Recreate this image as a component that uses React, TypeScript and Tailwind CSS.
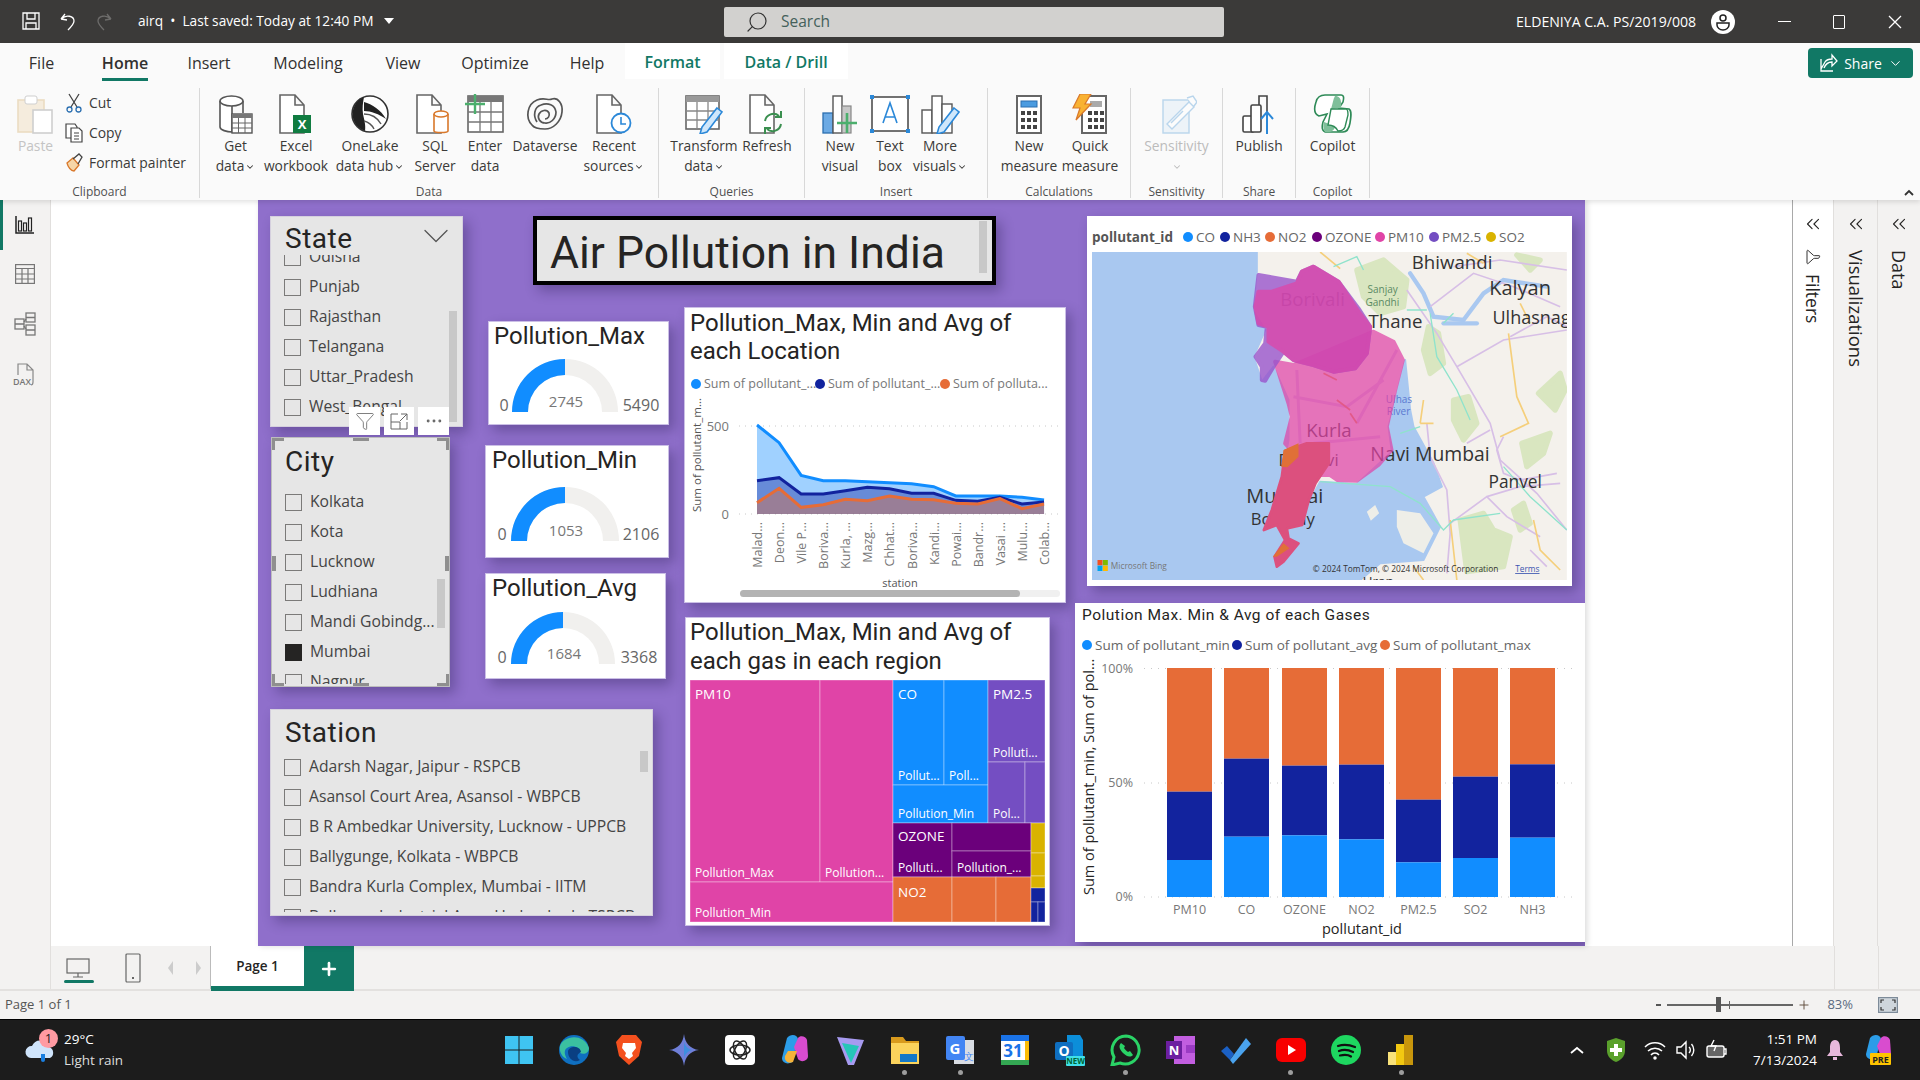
import { ReactNode } from 'react'
import { ChevronDown, ChevronsLeft, Filter, MoreHorizontal, Plus, Search } from 'lucide-react'

const DIN = "font-['Roboto',sans-serif]"

const TABS = [
  { label: 'File', w: 'w-[83px]' },
  { label: 'Home', w: 'w-[84px]', active: true },
  { label: 'Insert', w: 'w-[84px]' },
  { label: 'Modeling', w: 'w-[114px]' },
  { label: 'View', w: 'w-[76px]' },
  { label: 'Optimize', w: 'w-[108px]' },
  { label: 'Help', w: 'w-[76px]' },
]

const COLORS = {
  CO: '#118dff',
  NH3: '#12239e',
  NO2: '#e66c37',
  OZONE: '#6b007b',
  PM10: '#e044a7',
  'PM2.5': '#744ec2',
  SO2: '#d9b300',
}

/* ribbon icons, all on a 40 box */
function Ico({ children, dim }: { children: ReactNode; dim?: boolean }) {
  return (
    <svg viewBox="0 0 40 40" className={dim ? 'h-[40px] w-[40px] opacity-40' : 'h-[40px] w-[40px]'} fill="none">
      {children}
    </svg>
  )
}

const Doc = ({ x = 6 }: { x?: number }) => (
  <path
    d={`M${x} 1h15l9 10v28h-24z M${x + 15} 1v10h9`}
    fill="#fff"
    stroke="#666"
    strokeWidth="1.6"
  />
)

const RIBBON_ICONS: Record<string, ReactNode> = {
  getdata: (
    <Ico>
      <path d="M4 7v26c0 3 7 5 12 5V7" fill="#fff" stroke="#555" strokeWidth="1.6" />
      <path d="M27 7v12" stroke="#555" strokeWidth="1.6" />
      <ellipse cx="15.5" cy="7" rx="11.5" ry="5" fill="#fff" stroke="#555" strokeWidth="1.6" />
      <rect x="16" y="20" width="20" height="19" fill="#fff" stroke="#555" strokeWidth="1.4" />
      <path d="M16 20h20v4H16z" fill="#777" />
      <path d="M22.5 24v15M29 24v15M16 29h20M16 34h20" stroke="#666" />
    </Ico>
  ),
  excel: (
    <Ico>
      <Doc x={4} />
      <rect x="17" y="21" width="18" height="18" fill="#107c41" />
      <text x="26" y="35" fill="#fff" fontSize="13" textAnchor="middle" fontWeight="700">
        X
      </text>
    </Ico>
  ),
  onelake: (
    <Ico>
      <circle cx="20" cy="20" r="18" fill="#fff" stroke="#333" strokeWidth="1.6" />
      <path d="M14 3C6 6 1 15 3 24c1 6 6 11 12 13 1-6-1-12-2-17-1-6 0-12 1-17z" fill="#222" />
      <path d="M14 8c8 2 17 8 22 17-7-5-15-8-22-8z" fill="#222" />
      <path d="M14 20c6 0 13 3 17 10M14 27c4 1 8 4 10 8" stroke="#555" strokeWidth="1.4" />
    </Ico>
  ),
  sql: (
    <Ico>
      <Doc x={2} />
      <path d="M19 20v17c0 2 14 2 14 0V20" fill="#fff" stroke="#d9782b" strokeWidth="1.6" />
      <ellipse cx="26" cy="20" rx="7" ry="3" fill="#fff" stroke="#d9782b" strokeWidth="1.6" />
    </Ico>
  ),
  enter: (
    <Ico>
      <rect x="3" y="2" width="35" height="36" fill="#fff" stroke="#666" strokeWidth="1.6" />
      <path d="M3 2h35v6H3z" fill="#777" />
      <path d="M15 8v30M26 8v30M3 18h35M3 28h35" stroke="#777" strokeWidth="1.3" />
      <path d="M10 0v20M0 10h20" stroke="#4caf6d" strokeWidth="2.4" />
    </Ico>
  ),
  dataverse: (
    <Ico>
      <path
        d="M7 31C0 24 2 10 12 6c8-3 11 1 15-1 6-2 11 5 10 13-1 10-9 17-17 17-6 0-11-1-13-4z"
        stroke="#555"
        strokeWidth="1.7"
      />
      <path
        d="M12 28c-4-6-3-15 4-17 7-3 14 0 15 7 0 7-6 12-11 11-5 0-8-5-6-9 2-4 8-5 10-1 1 3-1 6-4 6"
        stroke="#555"
        strokeWidth="1.7"
      />
    </Ico>
  ),
  recent: (
    <Ico>
      <Doc x={3} />
      <circle cx="27" cy="29" r="9.5" fill="#fff" stroke="#2b88d8" strokeWidth="1.8" />
      <path d="M27 23v7h5" stroke="#2b88d8" strokeWidth="1.6" />
    </Ico>
  ),
  transform: (
    <Ico>
      <rect x="2" y="2" width="33" height="33" fill="#fff" stroke="#666" strokeWidth="1.6" />
      <path d="M2 2h33v6H2z" fill="#999" />
      <path d="M13 8v27M24 8v27M2 17h33M2 26h33" stroke="#888" strokeWidth="1.3" />
      <path d="M33 14l5 4-15 20-7 2 2-7z" fill="#cfe7fb" stroke="#2b88d8" strokeWidth="1.6" />
    </Ico>
  ),
  refresh: (
    <Ico>
      <Doc x={3} />
      <path d="M18 27a8.5 8.5 0 0 1 14-5M34 30a8.5 8.5 0 0 1-14 5" stroke="#3a8f4f" strokeWidth="2" />
      <path d="M34 17v6h-6M18 40v-6h6" stroke="#3a8f4f" strokeWidth="2" />
    </Ico>
  ),
  newvisual: (
    <Ico>
      <rect x="3" y="19" width="10" height="20" fill="#6caae4" stroke="#2b6fb0" strokeWidth="1.3" />
      <rect x="13" y="2" width="9" height="37" fill="#fff" stroke="#555" strokeWidth="1.4" />
      <rect x="22" y="12" width="9" height="27" fill="#c8c8c8" stroke="#888" strokeWidth="1.2" />
      <path d="M27 19v20M17 29h20" stroke="#4caf6d" strokeWidth="2.6" />
    </Ico>
  ),
  textbox: (
    <Ico>
      <rect x="2" y="3" width="36" height="34" fill="#fff" stroke="#444" strokeWidth="1.5" />
      <path d="M13 29l7-20 7 20M15.5 23h9" stroke="#2b88d8" strokeWidth="1.6" />
      <path
        d="M0 1h4v4H0zM36 1h4v4h-4zM0 35h4v4H0zM36 35h4v4h-4z"
        fill="#2b88d8"
      />
    </Ico>
  ),
  morevisuals: (
    <Ico>
      <rect x="2" y="16" width="10" height="23" fill="#fff" stroke="#555" strokeWidth="1.4" />
      <rect x="12" y="2" width="10" height="37" fill="#fff" stroke="#555" strokeWidth="1.4" />
      <rect x="22" y="10" width="10" height="29" fill="#fff" stroke="#555" strokeWidth="1.4" />
      <path d="M34 14l5 4-15 20-7 2 2-7z" fill="#cfe7fb" stroke="#2b88d8" strokeWidth="1.6" />
    </Ico>
  ),
  measure: (
    <Ico>
      <rect x="8" y="2" width="24" height="37" fill="#fff" stroke="#666" strokeWidth="2" />
      <rect x="12" y="7" width="16" height="6" fill="#4a9be0" stroke="#2b6fb0" />
      <path
        d="M12 17h4v4h-4zM18 17h4v4h-4zM24 17h4v4h-4zM12 24h4v4h-4zM18 24h4v4h-4zM24 24h4v4h-4zM12 31h4v4h-4zM18 31h4v4h-4zM24 31h4v4h-4z"
        fill="#444"
      />
    </Ico>
  ),
  quick: (
    <Ico>
      <rect x="12" y="2" width="24" height="37" fill="#fff" stroke="#666" strokeWidth="2" />
      <path d="M20 7h12v6H20z" fill="#aaa" />
      <path
        d="M18 17h4v4h-4zM24 17h4v4h-4zM30 17h4v4h-4zM18 24h4v4h-4zM24 24h4v4h-4zM30 24h4v4h-4zM18 31h4v4h-4zM24 31h4v4h-4zM30 31h4v4h-4z"
        fill="#444"
      />
      <path d="M10 0h11l-6 10h6L6 26l4-12H3z" fill="#f9b233" stroke="#d9782b" strokeWidth="1.2" />
    </Ico>
  ),
  sensitivity: (
    <Ico dim>
      <rect x="6" y="6" width="26" height="33" fill="#dbeaf7" stroke="#5aa0d8" strokeWidth="1.4" />
      <path d="M10 30l22-22 5 5-22 22zM30 4l6-2 4 6-3 4" fill="#fff" stroke="#5aa0d8" strokeWidth="1.4" />
      <path d="M14 29l12-12" stroke="#5aa0d8" strokeWidth="1.4" />
    </Ico>
  ),
  publish: (
    <Ico>
      <rect x="4" y="22" width="11" height="16" rx="1.5" fill="#fff" stroke="#444" strokeWidth="1.6" />
      <rect x="12" y="11" width="10" height="27" rx="1.5" fill="#fff" stroke="#444" strokeWidth="1.6" />
      <path d="M20 11V2h8v16" stroke="#444" strokeWidth="1.6" />
      <path d="M28 40V18M22 25l6-7 6 7" stroke="#2b88d8" strokeWidth="2" />
    </Ico>
  ),
  copilot: (
    <Ico>
      <path
        d="M12 1h16c3 0 3 3 2 7L26 14l10 1c3 2 2 8 1 14-1 6-3 9-7 9H14c-6 0-5-6-4-10L14 20 6 22C1 20 1 14 3 8c1-4 4-7 9-7z"
        fill="#fff"
        stroke="#2e8a57"
        strokeWidth="1.6"
      />
      <path d="M22 2c4 0 7 2 6 12l-10 1C20 9 20 5 22 2zM12 38c-2-3-2-7-1-10l11 4c0 3-2 5-5 6z" fill="#7fbf9a" />
      <path d="M18 15h15c2 0 2 3 2 6l-3 12c-1 3-3 4-7 4-3-6-9-6-10-6z" fill="#fff" stroke="#2e8a57" strokeWidth="1.4" />
    </Ico>
  ),
}

function RibbonButton({
  w,
  icon,
  line1,
  line2,
  caret,
  dim,
}: {
  w: string
  icon: string
  line1: string
  line2?: string
  caret?: boolean
  dim?: boolean
}) {
  return (
    <div className={`${w} flex h-full flex-col items-center pt-[6px]`}>
      {RIBBON_ICONS[icon]}
      <div
        className={
          dim
            ? 'mt-[2px] whitespace-nowrap text-center text-[13.8px] leading-[20px] text-[#bcbcbc]'
            : 'mt-[2px] whitespace-nowrap text-center text-[13.8px] leading-[20px] text-[#3b3a39]'
        }
      >
        {line1}
        <br />
        {line2}
        {caret && <ChevronDown className="ml-[1px] inline h-[10px] w-[10px]" strokeWidth={2.5} />}
      </div>
    </div>
  )
}

function RibbonGroup({
  w,
  pl,
  label,
  children,
}: {
  w: string
  pl: string
  label: string
  children: ReactNode
}) {
  return (
    <div className={`${w} flex h-[110px] shrink-0 flex-col border-r border-[#d8d8d8]`}>
      <div className={`${pl} flex h-[94px]`}>{children}</div>
      <div className="h-[16px] text-center text-[12px] leading-[20px] text-[#505050]">{label}</div>
    </div>
  )
}

function TitleBar() {
  return (
    <div className="flex h-[43px] items-center bg-[#3b3a39] text-[13.7px] text-white">
      <div className="flex w-[724px] items-center">
        <svg viewBox="0 0 20 20" className="ml-[21px] h-[20px] w-[20px]" fill="none" stroke="#fff" strokeWidth="1.3">
          <path d="M2 2h16v16H2zM6 2v6h8V2M5 18v-6h10v6" />
        </svg>
        <svg viewBox="0 0 20 20" className="ml-[17px] h-[20px] w-[20px]" fill="none" stroke="#fff" strokeWidth="1.3">
          <path d="M3 8l4-5M3 8l6 1M3.5 8C8 3 16 5 16 10c0 3-3 6-6 9" />
        </svg>
        <svg viewBox="0 0 20 20" className="ml-[16px] h-[20px] w-[20px]" fill="none" stroke="#6d6c6b" strokeWidth="1.3">
          <path d="M17 8l-4-5M17 8l-6 1M16.5 8C12 3 4 5 4 10c0 3 3 6 6 9" />
        </svg>
        <span className="ml-[24px] whitespace-nowrap">airq &nbsp;•&nbsp; Last saved: Today at 12:40 PM</span>
        <span className="ml-[10px] h-0 w-0 border-x-[5px] border-t-[6px] border-x-transparent border-t-white" />
      </div>
      <div className="flex h-[30px] w-[500px] items-center rounded-[2px] bg-[#d2d1cf] pl-[21px] text-[#44605a]">
        <Search className="h-[24px] w-[24px] -scale-x-100 text-[#333]" strokeWidth={1.2} />
        <span className="ml-[12px] text-[15.5px]">Search</span>
      </div>
      <div className="flex flex-1 items-center">
        <span className="ml-[292px] whitespace-nowrap text-[14.1px]">ELDENIYA C.A. PS/2019/008</span>
        <svg viewBox="0 0 24 24" className="ml-[15px] h-[24px] w-[24px]">
          <circle cx="12" cy="12" r="12" fill="#fff" />
          <circle cx="12" cy="8" r="3" fill="#fff" stroke="#222" strokeWidth="1.5" />
          <path d="M6 13h12v2a6 5 0 0 1-12 0z" fill="#fff" stroke="#222" strokeWidth="1.5" />
        </svg>
        <span className="ml-[43px] h-[1.5px] w-[13px] bg-white" />
        <span className="ml-[42px] h-[14px] w-[12px] rounded-[1px] border-[1.5px] border-white" />
        <svg viewBox="0 0 14 14" className="ml-[43px] h-[14px] w-[14px]" stroke="#fff" strokeWidth="1.3">
          <path d="M1 1l12 12M13 1L1 13" />
        </svg>
      </div>
    </div>
  )
}

function Ribbon() {
  return (
    <div className="relative z-10 h-[157px] bg-[#fafafa] shadow-[0_2px_5px_rgba(0,0,0,0.12)]">
      <div className="flex h-[40px] items-start">
        {TABS.map((t) => (
          <div key={t.label} className={`${t.w} flex justify-center text-[16px] text-[#323130]`}>
            <span
              className={
                t.active
                  ? 'flex h-[38px] items-center border-b-[3px] border-[#117865] pt-[4px] font-semibold'
                  : 'flex h-[40px] items-center'
              }
            >
              {t.label}
            </span>
          </div>
        ))}
        <div className="flex h-[36px] w-[95px] items-center justify-center bg-white pt-[1px] text-[16px] font-semibold text-[#117865]">
          Format
        </div>
        <div className="ml-[4px] flex h-[36px] w-[124px] items-center justify-center bg-white pt-[1px] text-[16px] font-semibold text-[#117865]">
          Data / Drill
        </div>
        <div className="ml-auto mr-[7px] mt-[5px] flex h-[30px] w-[105px] items-center justify-center gap-[6px] rounded-[4px] bg-[#117865] text-[14px] text-white">
          <svg viewBox="0 0 20 20" className="h-[20px] w-[20px]" fill="none" stroke="#fff" strokeWidth="1.3">
            <path d="M3 6v12h12M3 16L7 9c2-3 5-3 7-3V2l5 6-5 5V9c-3 0-6 1-8 6" />
          </svg>
          Share
          <ChevronDown className="h-[15px] w-[15px]" strokeWidth={1.6} />
        </div>
      </div>
      <div className="mt-[5px] flex">
        <RibbonGroup w="w-[200px]" pl="pl-0" label="Clipboard">
          <div className="flex h-full w-[65px] flex-col items-center pl-[6px] pt-[6px]">
            <svg viewBox="0 0 40 40" className="h-[40px] w-[40px]" fill="none">
              <rect x="2" y="6" width="26" height="32" fill="#f5ecdd" stroke="#ebdcc2" strokeWidth="1.6" />
              <rect x="9" y="2" width="12" height="8" rx="2" fill="#fff" stroke="#cfcfcf" />
              <rect x="17" y="16" width="19" height="23" fill="#fff" stroke="#cfcfcf" strokeWidth="1.6" />
            </svg>
            <div className="mt-[2px] text-[13.8px] leading-[20px] text-[#c4c4c4]">Paste</div>
          </div>
          <div className="text-[13.9px] text-[#3b3a39]">
            <div className="flex h-[30px] items-center gap-[6px]">
              <svg viewBox="0 0 18 20" className="h-[20px] w-[18px]" fill="none" strokeWidth="1.3">
                <path d="M4 1l8 13M14 1L6 14" stroke="#444" />
                <circle cx="4.5" cy="16.5" r="2.5" stroke="#2b6fb0" />
                <circle cx="13.5" cy="16.5" r="2.5" stroke="#2b6fb0" />
              </svg>
              Cut
            </div>
            <div className="flex h-[30px] items-center gap-[6px]">
              <svg viewBox="0 0 18 20" className="h-[20px] w-[18px]" fill="#fff" stroke="#444" strokeWidth="1.2">
                <path d="M1 1h9l2 3v11H1z" />
                <path d="M6 5h8l3 3v11H6z" />
                <path d="M9 10h5M9 13h5M9 16h5" />
              </svg>
              Copy
            </div>
            <div className="flex h-[30px] items-center gap-[6px]">
              <svg viewBox="0 0 18 20" className="h-[20px] w-[18px]" fill="none" strokeWidth="1.3">
                <path d="M2 10l6-5 6 7-5 6c-3 0-6-4-7-8z" fill="#f6d6a8" stroke="#d9782b" />
                <path d="M8 6l6-5 3 3-4 7" stroke="#444" />
              </svg>
              Format painter
            </div>
          </div>
        </RibbonGroup>
        <RibbonGroup w="w-[459px]" pl="pl-[5px]" label="Data">
          <RibbonButton w="w-[61px]" icon="getdata" line1="Get" line2="data" caret />
          <RibbonButton w="w-[60px]" icon="excel" line1="Excel" line2="workbook" />
          <RibbonButton w="w-[88px]" icon="onelake" line1="OneLake" line2="data hub" caret />
          <RibbonButton w="w-[42px]" icon="sql" line1="SQL" line2="Server" />
          <RibbonButton w="w-[58px]" icon="enter" line1="Enter" line2="data" />
          <RibbonButton w="w-[62px]" icon="dataverse" line1="Dataverse" />
          <RibbonButton w="w-[76px]" icon="recent" line1="Recent" line2="sources" caret />
        </RibbonGroup>
        <RibbonGroup w="w-[146px]" pl="pl-[8px]" label="Queries">
          <RibbonButton w="w-[74px]" icon="transform" line1="Transform" line2="data" caret />
          <RibbonButton w="w-[52px]" icon="refresh" line1="Refresh" />
        </RibbonGroup>
        <RibbonGroup w="w-[183px]" pl="pl-[10px]" label="Insert">
          <RibbonButton w="w-[50px]" icon="newvisual" line1="New" line2="visual" />
          <RibbonButton w="w-[50px]" icon="textbox" line1="Text" line2="box" />
          <RibbonButton w="w-[50px]" icon="morevisuals" line1="More" line2="visuals" caret />
        </RibbonGroup>
        <RibbonGroup w="w-[143px]" pl="pl-[11px]" label="Calculations">
          <RibbonButton w="w-[60px]" icon="measure" line1="New" line2="measure" />
          <RibbonButton w="w-[62px]" icon="quick" line1="Quick" line2="measure" />
        </RibbonGroup>
        <RibbonGroup w="w-[92px]" pl="pl-0" label="Sensitivity">
          <RibbonButton w="w-[92px]" icon="sensitivity" line1="Sensitivity" line2="" caret dim />
        </RibbonGroup>
        <RibbonGroup w="w-[73px]" pl="pl-0" label="Share">
          <RibbonButton w="w-[73px]" icon="publish" line1="Publish" />
        </RibbonGroup>
        <RibbonGroup w="w-[74px]" pl="pl-0" label="Copilot">
          <RibbonButton w="w-[74px]" icon="copilot" line1="Copilot" />
        </RibbonGroup>
        <div className="ml-auto mr-[6px] flex h-[110px] items-end pb-[2px] text-[#333]">
          <svg viewBox="0 0 10 7" className="h-[7px] w-[10px]" fill="none" stroke="#333" strokeWidth="1.8">
            <path d="M1 6l4-4 4 4" />
          </svg>
        </div>
      </div>
    </div>
  )
}

function LeftRail() {
  return (
    <div className="relative flex w-[51px] shrink-0 flex-col items-center border-r border-[#e1dfdd] bg-[#f3f2f1] pt-[15px]">
      <span className="absolute left-0 top-0 h-[50px] w-[3px] bg-[#117865]" />
      <svg viewBox="0 0 20 20" className="h-[20px] w-[20px]" fill="none" stroke="#222" strokeWidth="1.2">
        <path d="M1 1v17h18" strokeWidth="1.5" />
        <rect x="3.5" y="6" width="3" height="10" />
        <rect x="8.5" y="8" width="3" height="8" />
        <rect x="13.5" y="3" width="3" height="13" />
      </svg>
      <svg viewBox="0 0 20 20" className="mt-[29px] h-[20px] w-[20px]" fill="none" stroke="#777" strokeWidth="1.2">
        <rect x="0.6" y="0.6" width="18.8" height="18.8" />
        <path d="M0.6 4.5h18.8M0.6 10h18.8M0.6 15h18.8M7 4.5v15M13 4.5v15" />
      </svg>
      <svg viewBox="0 0 24 24" className="mt-[28px] h-[24px] w-[24px]" fill="none" stroke="#777" strokeWidth="1.3">
        <rect x="13" y="1" width="9" height="9" />
        <rect x="13" y="13" width="9" height="10" />
        <rect x="2" y="7" width="9" height="10" />
        <path d="M13 5.5h9M13 18h9M2 12h9M11 10l2-3M11 14l2 3" />
      </svg>
      <div className="relative mt-[27px] h-[24px] w-[24px]">
        <svg viewBox="0 0 24 24" className="h-[24px] w-[24px]" fill="none" stroke="#888" strokeWidth="1.2">
          <path d="M5 12V1h9l6 6v12c0 2-1 3-2 3M14 1v6h6" />
        </svg>
        <span className="absolute bottom-0 left-0 text-[9px] font-semibold leading-[10px] text-[#777]">DAX</span>
      </div>
    </div>
  )
}

function Card({ className, children }: { className: string; children: ReactNode }) {
  return (
    <div className={`${className} absolute overflow-hidden shadow-[5px_6px_12px_rgba(30,20,70,0.33)]`}>{children}</div>
  )
}

function Check({ label, on }: { label: string; on?: boolean }) {
  return (
    <div className="flex h-[30px] items-center whitespace-nowrap pl-[13px] text-[15.7px] text-[#444]">
      <span
        className={
          on
            ? 'mr-[8px] h-[17px] w-[17px] shrink-0 bg-[#252423]'
            : 'mr-[8px] h-[17px] w-[17px] shrink-0 border border-[#7b7a79]'
        }
      />
      {label}
    </div>
  )
}

function Scrollbar({ className }: { className: string }) {
  return <span className={`${className} absolute w-[8px] bg-[#c8c8c8]`} />
}

function Gauge({
  title,
  value,
  max,
  className,
  w,
  h,
  cx,
  cy,
  R,
  left,
  right,
  titlePad,
}: {
  title: string
  value: number
  max: number
  className: string
  w: number
  h: number
  cx: number
  cy: number
  R: number
  left: number
  right: number
  titlePad: string
}) {
  const r = R - 16
  return (
    <Card className={`${className} border border-[#cbbfe6] bg-white`}>
      <div className={`${titlePad} ${DIN} h-[29px] text-[24px] leading-[28px] text-[#252423]`}>{title}</div>
      <svg viewBox={`0 29 ${w} ${h - 29}`} width={w} height={h - 29} className="block font-['Open_Sans',sans-serif]">
        <path
          d={`M${cx - R} ${cy}A${R} ${R} 0 0 1 ${cx + R} ${cy}L${cx + r} ${cy}A${r} ${r} 0 0 0 ${cx - r} ${cy}Z`}
          fill="#f1f0ee"
        />
        <path
          d={`M${cx - R} ${cy}A${R} ${R} 0 0 1 ${cx} ${cy - R}L${cx} ${cy - r}A${r} ${r} 0 0 0 ${cx - r} ${cy}Z`}
          fill="#118dff"
        />
        <text x={cx + 1} y={cy - 5} textAnchor="middle" fontSize="15" fill="#777">
          {value}
        </text>
        <text x={left} y={cy - 1} textAnchor="middle" fontSize="16" fill="#666">
          0
        </text>
        <text x={right} y={cy - 1} textAnchor="middle" fontSize="16" fill="#666">
          {max}
        </text>
      </svg>
    </Card>
  )
}

const MAX_LINE = [675, 728, 826, 842, 842, 845, 848, 851, 860, 888, 888, 888, 892, 900]
const AVG_LINE = [842, 833, 882, 882, 872, 862, 866, 880, 880, 901, 904, 892, 912, 906]
const MIN_LINE = [908, 865, 922, 914, 898, 902, 888, 898, 899, 910, 912, 896, 926, 912]
const STATIONS = [
  'Malad...',
  'Deon...',
  'Vile P...',
  'Boriva...',
  'Kurla, ...',
  'Mazg...',
  'Chhat...',
  'Boriva...',
  'Kandi...',
  'Powai...',
  'Bandr...',
  'Vasai ...',
  'Mulu...',
  'Colab...',
]
const lx = (i: number) => 756 + 22.08 * i
const ly = (v: number) => 200 + v / 3
const linePath = (vals: number[]) => vals.map((v, i) => `${i ? 'L' : 'M'}${lx(i)} ${ly(v)}`).join('')
const areaPath = (vals: number[]) => `${linePath(vals)}L${lx(13)} 514L756 514Z`

function LegendDot({ color, text, w }: { color: string; text: string; w: string }) {
  return (
    <div className={`${w} flex shrink-0 items-center gap-[3px]`}>
      <span className="h-[10px] w-[10px] shrink-0 rounded-full" style={{ backgroundColor: color }} />
      <span className="whitespace-nowrap">{text}</span>
    </div>
  )
}

function LineCard() {
  return (
    <Card className="left-[426px] top-[107px] h-[296px] w-[382px] border border-[#cbbfe6] bg-white">
      <div className={`${DIN} pl-[5px] pt-[1px] text-[24px] leading-[28px] text-[#252423]`}>
        Pollution_Max, Min and Avg of
        <br />
        each Location
      </div>
      <div className="mt-[7px] flex h-[24px] items-center pl-[6px] text-[12.5px] text-[#777]">
        <LegendDot color="#118dff" text="Sum of pollutant_..." w="w-[124px]" />
        <LegendDot color="#12239e" text="Sum of pollutant_..." w="w-[125px]" />
        <LegendDot color="#e66c37" text="Sum of polluta..." w="w-[110px]" />
      </div>
      <svg viewBox="684 396 382 207" width="382" height="207" className="block font-['Open_Sans',sans-serif]">
        <text transform="translate(700 512) rotate(-90)" fontSize="11.5" fill="#555">
          Sum of pollutant_m...
        </text>
        <text x="728" y="431" textAnchor="end" fontSize="13" fill="#777">
          500
        </text>
        <text x="728" y="519" textAnchor="end" fontSize="13" fill="#777">
          0
        </text>
        <path d="M738 426H1057M738 514H1057" stroke="#c8c8c8" strokeDasharray="1 5" />
        <path d={areaPath(MAX_LINE)} fill="#118dff" opacity="0.4" />
        <path d={areaPath(AVG_LINE)} fill="#12239e" opacity="0.4" />
        <path d={areaPath(MIN_LINE)} fill="#e66c37" opacity="0.4" />
        <path d={linePath(MAX_LINE)} fill="none" stroke="#118dff" strokeWidth="3" />
        <path d={linePath(AVG_LINE)} fill="none" stroke="#12239e" strokeWidth="3" />
        <path d={linePath(MIN_LINE)} fill="none" stroke="#e66c37" strokeWidth="3" />
        {STATIONS.map((s, i) => (
          <text
            key={i}
            transform={`translate(${lx(i) + 5} 522) rotate(-90)`}
            textAnchor="end"
            fontSize="12.5"
            fill="#777"
          >
            {s}
          </text>
        ))}
        <text x="899" y="587" textAnchor="middle" fontSize="11" fill="#555">
          station
        </text>
        <rect x="739" y="590" width="320" height="7" rx="3.5" fill="#f0f0f0" />
        <rect x="739" y="590" width="280" height="7" rx="3.5" fill="#b3b3b3" />
      </svg>
    </Card>
  )
}

function BayMap() {
  return (
    <svg
      viewBox="36 126 1424 984"
      width="475"
      height="328"
      className="ml-[5px] block font-['Open_Sans',sans-serif]"
    >
      <rect x="36" y="126" width="1424" height="984" fill="#f4f1ec" />
      {/* green patches */}
      <g fill="#d9e6c0" stroke="#d9e6c0" strokeWidth="16" strokeLinejoin="round">
        <path d="M830 180l80-30 70 60-10 80-70 20-50-50z" />
        <path d="M1045 350l30 20 15 90-40 30-20-70zM1120 570l45-10 25 80-40 50-30-60z" />
        <path d="M1375 550l65-60 15 50-30 60zM1325 700l85-30-20 60-50 40zM1140 930l70-20 30 50 50 20-20 90-110 15z" />
        <path d="M1310 135l70 15-30 30zM1300 900l30-20 20 60-30 20z" />
      </g>
      {/* water */}
      <path
        d="M36 126H530V185L518 300L555 360L520 440L545 515L580 470L625 570L625 690L605 800L570 900L548 962L590 950L610 990L578 1040L590 1075L610 1060L660 1000L625 990L620 960L670 950L690 870L720 815L830 822L935 725L925 650L975 450L990 600L1000 650L1060 760L1085 830L1030 860L1080 950L1030 1050L900 1060L840 1110H36Z"
        fill="#a9c8f0"
        stroke="#a9c8f0"
        strokeLinejoin="round"
        strokeWidth="6"
      />
      <g fill="#eeeee8">
        <path d="M860 905l25-20 12 25-25 22zM950 900l70 10 40 60-30 60-60-30-20-50z" />
      </g>
      <g fill="none" stroke="#a9c8f0" strokeWidth="13" strokeLinecap="round">
        <path d="M990 190l40 60 30 70 90 10 60-80 60-40 130 20" />
        <path d="M1090 340l100 0" />
      </g>
      <g fill="none" stroke="#d7bfe6" strokeWidth="5">
        <path d="M980 240l90 130 60 100 100 170 30 110 110 100 90 110" />
        <path d="M1130 470l140-80 190-30M1120 170l140-20 200 30M1050 290l130-100 120 40 140 60" />
        <path d="M1040 640l10 100 50 100 10 130-10 120M1220 860l100-30 120-10M1110 940l110-80 60 60 100 60" />
        <path d="M1270 680l-20 40 20 70 50 20 110-20M1290 380l110-60 60 30M1160 700l70-40M1350 1020l50 50" />
        <path d="M650 480l10 220M640 560l160 30 110-80M830 640l120-220M700 700l200-20" strokeWidth="9" />
      </g>
      <g fill="none" stroke="#f5cf7b" strokeWidth="5">
        <path d="M1285 370l25 190 35 80-85 40M1020 640l10-70M1020 640h40M1360 930l20 90 60 60" />
        <path d="M1110 930l20 180M720 126l60 50M1160 130l50 30M1320 280l30 60M1000 1070l30 40" />
        <path d="M770 570l40 30M810 610l20 30M730 490l40 20" stroke="#e8903a" />
      </g>
      <g fill="none" stroke="#8fe3cc" strokeWidth="4">
        <path d="M720 815l210 15 90 50 70 80 30-30 140-20M1050 310l20 130 60 100 40 90M960 670l60-20M1270 770l80 90 110 100" />
        <path d="M760 170l70-30 20 40M980 300l60 0M1090 340l30-30" />
      </g>
      <g fill="#333">
        <text x="995" y="178" fontSize="56">
          Bhiwandi
        </text>
        <text x="1227" y="256" fontSize="60">
          Kalyan
        </text>
        <text x="1237" y="343" fontSize="54">
          Ulhasnagar
        </text>
        <text x="865" y="353" fontSize="56">
          Thane
        </text>
        <text x="678" y="680" fontSize="56">
          Kurla
        </text>
        <text x="600" y="287" fontSize="56">
          Borivali
        </text>
        <text x="870" y="753" fontSize="58">
          Navi Mumbai
        </text>
        <text x="1225" y="833" fontSize="52">
          Panvel
        </text>
        <text x="498" y="878" fontSize="60">
          Mumbai
        </text>
        <text x="512" y="946" fontSize="50">
          Bombay
        </text>
        <text x="595" y="768" fontSize="50">
          Dharavi
        </text>
        <text x="848" y="1128" fontSize="40">
          Uran
        </text>
      </g>
      <g fill="#5b8a63" fontSize="30">
        <text x="862" y="250">
          Sanjay
        </text>
        <text x="856" y="288">
          Gandhi
        </text>
      </g>
      <g fill="#5a78d0" fontSize="30">
        <text x="917" y="578">
          Ulhas
        </text>
        <text x="920" y="615">
          River
        </text>
      </g>
      {/* pollutant shapes */}
      <g strokeLinejoin="round" strokeWidth="12">
        <path
          d="M585 455L640 465L880 365L940 395L968 450L945 540L920 650L934 720L895 765L830 812L772 810L750 795L700 795L615 700L635 620L625 580Z"
          fill="#e044a7"
          stroke="#e044a7"
          opacity="0.72"
        />
        <path
          d="M535 195L650 215L665 185L700 170L775 215L835 295L870 350L860 430L825 475L760 485L700 465L640 450L610 425L580 470L555 512L545 510L545 470L526 440L555 400L560 350L535 345L524 290Z"
          fill="#9a55cc"
          stroke="#9a55cc"
          opacity="0.8"
        />
        <path
          d="M575 245L650 220L665 185L700 170L775 215L835 305L870 350L860 430L825 475L760 485L700 465L640 450L610 425L565 395L565 350L535 340L526 290L535 245Z"
          fill="#e044a7"
          stroke="#e044a7"
          opacity="0.72"
        />
        <path
          d="M615 722L680 700L746 700L746 760L706 820L686 870L666 945L620 955L625 985L655 1000L610 1055L590 1070L583 1040L615 990L590 945L551 960L575 900L605 800Z"
          fill="#dc507e"
          stroke="#dc507e"
          strokeWidth="8"
        />
      </g>
      <path d="M610 720L655 700L655 740L622 772L603 770ZM578 1040L610 1000L628 1015L590 1040Z" fill="#e07038" />
      <path d="M52 1050h15v16H52z" fill="#f25022" />
      <path d="M68 1050h15v16H68z" fill="#7fba00" />
      <path d="M52 1067h15v16H52z" fill="#00a4ef" />
      <path d="M68 1067h15v16H68z" fill="#ffb900" />
      <text x="92" y="1077" fontSize="25" fill="#777">
        Microsoft Bing
      </text>
      <text x="698" y="1086" fontSize="25" fill="#333">
        © 2024 TomTom, © 2024 Microsoft Corporation
      </text>
      <text x="1305" y="1086" fontSize="25" fill="#3a55b0" textDecoration="underline">
        Terms
      </text>
    </svg>
  )
}

function MapCard() {
  return (
    <Card className="left-[829px] top-[16px] h-[370px] w-[485px] bg-white">
      <div className="flex h-[36px] items-end pb-[5px] pl-[5px] text-[13.5px] text-[#666]">
        <span className="mr-[10px] font-bold text-[#555]">pollutant_id</span>
        <LegendDot color={COLORS.CO} text="CO" w="w-[37px]" />
        <LegendDot color={COLORS.NH3} text="NH3" w="w-[45px]" />
        <LegendDot color={COLORS.NO2} text="NO2" w="w-[47px]" />
        <LegendDot color={COLORS.OZONE} text="OZONE" w="w-[63px]" />
        <LegendDot color={COLORS.PM10} text="PM10" w="w-[54px]" />
        <LegendDot color={COLORS['PM2.5']} text="PM2.5" w="w-[57px]" />
        <LegendDot color={COLORS.SO2} text="SO2" w="w-[50px]" />
      </div>
      <BayMap />
    </Card>
  )
}

const TREE: [number, number, number, number, string, string?, number?][] = [
  [689, 679, 130, 202, COLORS.PM10, 'Pollution_Max'],
  [819, 679, 73, 202, COLORS.PM10, 'Pollution...'],
  [689, 881, 203, 40, COLORS.PM10, 'Pollution_Min'],
  [892, 679, 51, 105, COLORS.CO, 'Pollut...'],
  [943, 679, 44, 105, COLORS.CO, 'Poll...'],
  [892, 784, 95, 38, COLORS.CO, 'Pollution_Min'],
  [987, 679, 57, 82, COLORS['PM2.5'], 'Polluti...'],
  [987, 761, 37, 61, COLORS['PM2.5'], 'Pol...'],
  [1024, 761, 20, 61, COLORS['PM2.5']],
  [892, 822, 59, 54, COLORS.OZONE, 'Polluti...'],
  [951, 822, 79, 28, COLORS.OZONE],
  [951, 850, 79, 26, COLORS.OZONE, 'Pollution_...'],
  [892, 876, 59, 45, COLORS.NO2],
  [951, 876, 44, 45, COLORS.NO2],
  [995, 876, 35, 45, COLORS.NO2],
  [1030, 822, 14, 30, COLORS.SO2],
  [1030, 852, 14, 23, COLORS.SO2],
  [1030, 875, 14, 12, COLORS.SO2],
  [1030, 887, 14, 14, COLORS.NH3],
  [1030, 901, 7, 20, COLORS.NH3],
  [1037, 901, 7, 20, COLORS.NH3],
]

const TREE_HEADS: [number, number, string][] = [
  [694, 698, 'PM10'],
  [897, 698, 'CO'],
  [992, 698, 'PM2.5'],
  [897, 840, 'OZONE'],
  [897, 896, 'NO2'],
]

function TreemapCard() {
  return (
    <Card className="left-[427px] top-[417px] h-[309px] w-[365px] border border-[#cbbfe6] bg-white">
      <div className={`${DIN} h-[62px] pl-[4px] text-[24px] leading-[29px] text-[#252423]`}>
        Pollution_Max, Min and Avg of
        <br />
        each gas in each region
      </div>
      <svg viewBox="685 679 365 247" width="365" height="247" className="block font-['Open_Sans',sans-serif]">
        {TREE.map(([x, y, w, h, fill, text], i) => (
          <g key={i}>
            <rect x={x} y={y} width={w} height={h} fill={fill} stroke="#fff" strokeOpacity="0.35" />
            {text && (
              <text x={x + 5} y={y + h - 5} fontSize="12" fill="#fff">
                {text}
              </text>
            )}
          </g>
        ))}
        {TREE_HEADS.map(([x, y, text]) => (
          <text key={text} x={x} y={y} fontSize="13.5" fill="#fff">
            {text}
          </text>
        ))}
      </svg>
    </Card>
  )
}

const BARS = [
  { id: 'PM10', x: 1167, a: 575, b: 780 },
  { id: 'CO', x: 1224, a: 476, b: 710 },
  { id: 'OZONE', x: 1282, a: 497, b: 706 },
  { id: 'NO2', x: 1339, a: 494, b: 718 },
  { id: 'PM2.5', x: 1396, a: 599, b: 787 },
  { id: 'SO2', x: 1453, a: 530, b: 774 },
  { id: 'NH3', x: 1510, a: 493, b: 713 },
]
const by = (v: number) => 600 + v / 3

function BarCard() {
  return (
    <Card className="left-[817px] top-[403px] h-[339px] w-[510px] bg-white">
      <div className={`${DIN} h-[24px] pl-[7px] text-[15.5px] leading-[24px] tracking-[0.5px] text-[#252423]`}>
        Polution Max. Min &amp; Avg of each Gases
      </div>
      <div className="flex h-[30px] items-center pl-[7px] pt-[6px] text-[13.5px] text-[#666]">
        <LegendDot color="#118dff" text="Sum of pollutant_min" w="w-[150px]" />
        <LegendDot color="#12239e" text="Sum of pollutant_avg" w="w-[148px]" />
        <LegendDot color="#e66c37" text="Sum of pollutant_max" w="w-[150px]" />
      </div>
      <svg viewBox="1075 657 510 285" width="510" height="285" className="block font-['Open_Sans',sans-serif]">
        <path d="M1144 668.5H1575M1144 783H1575M1144 897H1575" stroke="#c8c8c8" strokeDasharray="1 6" />
        <g fontSize="12.5" fill="#777" textAnchor="end">
          <text x="1133" y="673">
            100%
          </text>
          <text x="1133" y="787">
            50%
          </text>
          <text x="1133" y="901">
            0%
          </text>
        </g>
        <text transform="translate(1094 895) rotate(-90)" fontSize="14.5" fill="#252423">
          Sum of pollutant_min, Sum of pol...
        </text>
        {BARS.map((d) => (
          <g key={d.id}>
            <rect x={d.x} y={668} width="45" height={by(d.a) - 668} fill="#e66c37" />
            <rect x={d.x} y={by(d.a)} width="45" height={by(d.b) - by(d.a)} fill="#12239e" />
            <rect x={d.x} y={by(d.b)} width="45" height={897 - by(d.b)} fill="#118dff" />
            <text x={d.x + 22.5} y="914" textAnchor="middle" fontSize="12.5" fill="#777">
              {d.id}
            </text>
          </g>
        ))}
        <text x="1362" y="934" textAnchor="middle" fontSize="14.5" fill="#252423">
          pollutant_id
        </text>
      </svg>
    </Card>
  )
}

function Handle({ className }: { className: string }) {
  return <span className={`${className} absolute border-[#8f8f8f]`} />
}

function ReportPage() {
  return (
    <div className="relative ml-[207px] h-full w-[1327px] overflow-hidden bg-[#8f6fcb] shadow-[2px_0_6px_rgba(0,0,0,0.15)]">
      {/* State slicer */}
      <Card className="left-[12px] top-[16px] h-[211px] w-[193px] border border-[#d5d0de] bg-[#e6e6e6]">
        <div className={`${DIN} h-[38px] pl-[14px] pt-[3px] text-[28px] leading-[38px] tracking-[0.5px] text-[#252423]`}>
          State
        </div>
        <ChevronDown className="absolute left-[143px] top-[-3px] h-[44px] w-[44px] text-[#555]" strokeWidth={0.7} />
        <div className="h-[171px] overflow-hidden">
          <div className="-mt-[13px]">
            <Check label="Odisha" />
            <Check label="Punjab" />
            <Check label="Rajasthan" />
            <Check label="Telangana" />
            <Check label="Uttar_Pradesh" />
            <Check label="West_Bengal" />
          </div>
        </div>
        <Scrollbar className="left-[178px] top-[94px] h-[111px]" />
      </Card>

      {/* City slicer, selected */}
      <Card className="left-[13px] top-[237px] h-[250px] w-[179px] border border-[#bdbdbd] bg-[#e6e6e6]">
        <div className={`${DIN} h-[49px] pl-[13px] pt-[6px] text-[28px] leading-[36px] tracking-[0.5px] text-[#252423]`}>
          City
        </div>
        <div className="h-[197px] overflow-hidden">
          <Check label="Kolkata" />
          <Check label="Kota" />
          <Check label="Lucknow" />
          <Check label="Ludhiana" />
          <Check label="Mandi Gobindg..." />
          <Check label="Mumbai" on />
          <Check label="Nagpur" />
        </div>
        <Scrollbar className="left-[165px] top-[141px] h-[49px]" />
        <Handle className="left-0 top-0 h-[12px] w-[12px] border-l-[3px] border-t-[3px]" />
        <Handle className="right-0 top-0 h-[12px] w-[12px] border-r-[3px] border-t-[3px]" />
        <Handle className="bottom-0 left-0 h-[12px] w-[12px] border-b-[3px] border-l-[3px]" />
        <Handle className="bottom-0 right-0 h-[12px] w-[12px] border-b-[3px] border-r-[3px]" />
        <Handle className="left-[81px] top-0 h-0 w-[16px] border-t-[3px]" />
        <Handle className="bottom-0 left-[81px] h-0 w-[16px] border-b-[3px]" />
        <Handle className="left-0 top-[118px] h-[15px] w-0 border-l-[4px]" />
        <Handle className="right-0 top-[118px] h-[15px] w-0 border-r-[4px]" />
      </Card>
      <div className="absolute left-[91px] top-[207px] flex gap-[4px] text-[#666]">
        <div className="flex h-[28px] w-[31px] items-center justify-center bg-white">
          <Filter className="h-[20px] w-[20px]" strokeWidth={1} />
        </div>
        <div className="flex h-[28px] w-[30px] items-center justify-center bg-white">
          <svg viewBox="0 0 18 18" className="h-[18px] w-[18px]" fill="none" stroke="#666" strokeWidth="1">
            <path d="M8 2H1v15h16v-7M1 10h9v7M11 2h6v6M17 2l-7 7" />
          </svg>
        </div>
        <div className="flex h-[28px] w-[31px] items-center justify-center bg-white">
          <MoreHorizontal className="h-[20px] w-[20px]" strokeWidth={1.5} />
        </div>
      </div>

      {/* Station slicer */}
      <Card className="left-[12px] top-[509px] h-[207px] w-[383px] border border-[#d5d0de] bg-[#e6e6e6]">
        <div className={`${DIN} h-[42px] pl-[14px] pt-[5px] text-[28px] leading-[36px] tracking-[0.5px] text-[#252423]`}>
          Station
        </div>
        <div className="h-[160px] overflow-hidden">
          <Check label="Adarsh Nagar, Jaipur - RSPCB" />
          <Check label="Asansol Court Area, Asansol - WBPCB" />
          <Check label="B R Ambedkar University, Lucknow - UPPCB" />
          <Check label="Ballygunge, Kolkata - WBPCB" />
          <Check label="Bandra Kurla Complex, Mumbai - IITM" />
          <Check label="Bollaram Industrial Area, Hyderabad - TSPCB" />
        </div>
        <Scrollbar className="left-[369px] top-[41px] h-[21px]" />
      </Card>

      {/* Page title */}
      <Card className="left-[275px] top-[16px] h-[69px] w-[463px] border-[4px] border-black bg-[#e6e6e6]">
        <div className={`${DIN} whitespace-nowrap pl-[13px] pt-[3px] text-[44.5px] leading-[61px] text-[#252423]`}>
          Air Pollution in India
        </div>
        <Scrollbar className="left-[442px] top-[1px] h-[52px]" />
      </Card>

      <Gauge
        className="left-[230px] top-[121px] h-[104px] w-[181px]"
        title="Pollution_Max"
        value={2745}
        max={5490}
        w={181}
        h={104}
        cx={76}
        cy={90}
        R={53}
        left={15}
        right={152}
        titlePad="pl-[5px]"
      />
      <Gauge
        className="left-[227px] top-[245px] h-[113px] w-[184px]"
        title="Pollution_Min"
        value={1053}
        max={2106}
        w={184}
        h={113}
        cx={79}
        cy={95}
        R={54}
        left={16}
        right={155}
        titlePad="pl-[6px]"
      />
      <Gauge
        className="left-[227px] top-[373px] h-[106px] w-[181px]"
        title="Pollution_Avg"
        value={1684}
        max={3368}
        w={181}
        h={106}
        cx={77}
        cy={90}
        R={52}
        left={16}
        right={153}
        titlePad="pl-[6px]"
      />

      <LineCard />
      <MapCard />
      <TreemapCard />
      <BarCard />
    </div>
  )
}

function SidePanes() {
  return (
    <>
      <div className="flex w-[41px] shrink-0 flex-col items-center border-l border-[#a9a9a9] bg-white pt-[13px] text-[#252423]">
        <ChevronsLeft className="h-[22px] w-[22px]" strokeWidth={1.2} />
        <Filter className="mt-[14px] h-[16px] w-[16px] -rotate-90" strokeWidth={1.4} />
        <span className="mt-[9px] text-[17.5px] font-medium leading-[22px] [writing-mode:vertical-rl]">Filters</span>
      </div>
      <div className="flex w-[44px] shrink-0 flex-col items-center border-l border-[#e1dfdd] bg-[#f3f2f1] pt-[13px] text-[#252423]">
        <ChevronsLeft className="h-[22px] w-[22px]" strokeWidth={1.2} />
        <span className="mt-[15px] text-[18.5px] font-medium leading-[22px] [writing-mode:vertical-rl]">
          Visualizations
        </span>
      </div>
      <div className="flex w-[43px] shrink-0 flex-col items-center border-l border-[#e1dfdd] bg-[#f3f2f1] pt-[13px] text-[#252423]">
        <ChevronsLeft className="h-[22px] w-[22px]" strokeWidth={1.2} />
        <span className="mt-[15px] text-[18px] font-medium leading-[22px] [writing-mode:vertical-rl]">Data</span>
      </div>
    </>
  )
}

function PageTabs() {
  return (
    <div className="flex h-[45px] shrink-0 border-b-2 border-[#e3e1df] bg-[#f3f2f1]">
      <div className="h-full w-[51px] border-r border-[#e1dfdd]" />
      <div className="relative flex w-[160px] items-center border-r border-[#bbb]">
        <svg viewBox="0 0 24 24" className="ml-[15px] h-[24px] w-[24px]" fill="none" stroke="#666" strokeWidth="1.2">
          <rect x="1" y="3" width="22" height="14" />
          <path d="M12 17v4M7 21h10" />
        </svg>
        <span className="absolute bottom-[6px] left-[13px] h-[3px] w-[30px] rounded-full bg-[#117865]" />
        <svg viewBox="0 0 16 30" className="ml-[35px] h-[30px] w-[16px]" fill="none" stroke="#666" strokeWidth="1.2">
          <rect x="1" y="1" width="14" height="28" rx="1" />
          <path d="M7 25h2" strokeWidth="2" />
        </svg>
        <span className="ml-[27px] h-0 w-0 border-y-[7px] border-r-[5px] border-y-transparent border-r-[#ccc]" />
        <span className="ml-[23px] h-0 w-0 border-y-[7px] border-l-[5px] border-y-transparent border-l-[#ccc]" />
      </div>
      <div className="flex h-[45px] w-[93px] items-center justify-center border-b-[5px] border-[#117865] bg-white pt-[1px] text-[13.5px] font-semibold text-[#252423]">
        Page 1
      </div>
      <div className="flex h-[45px] w-[50px] items-center justify-center bg-[#117865]">
        <Plus className="h-[20px] w-[20px] text-white" strokeWidth={3.2} />
      </div>
      <div className="ml-auto h-full w-[86px] border-l border-[#e1dfdd]">
        <div className="ml-[43px] h-full border-l border-[#e1dfdd]" />
      </div>
    </div>
  )
}

function StatusBar() {
  return (
    <div className="flex h-[28px] shrink-0 items-center bg-[#f3f2f1] text-[13px] text-[#555]">
      <span className="ml-[5px]">Page 1 of 1</span>
      <div className="ml-auto flex items-center">
        <span className="h-[2px] w-[5px] bg-[#555]" />
        <div className="relative ml-[6px] h-[1.5px] w-[126px] bg-[#666]">
          <span className="absolute -top-[7px] left-[49px] h-[15px] w-[5px] bg-[#555]" />
          <span className="absolute -top-[3px] left-[62px] h-[8px] w-px bg-[#666]" />
        </div>
        <Plus className="ml-[4px] h-[14px] w-[14px] text-[#5c4a3a]" strokeWidth={1.6} />
        <span className="ml-[16px] text-[#5a6a80]">83%</span>
        <svg viewBox="0 0 20 16" className="ml-[25px] mr-[22px] h-[16px] w-[20px]" fill="#cfd6dc" stroke="#7d8b99" strokeWidth="1.2">
          <rect x="0.6" y="0.6" width="18.8" height="14.8" />
          <path d="M6 3H3v3M14 3h3v3M6 13H3v-3M14 13h3v-3" fill="none" stroke="#333" />
        </svg>
      </div>
    </div>
  )
}

function Tb({ children, dot }: { children: ReactNode; dot?: boolean }) {
  return (
    <div className="relative flex h-[61px] w-[55.15px] items-center justify-center">
      <svg viewBox="0 0 32 32" className="h-[32px] w-[32px]">
        {children}
      </svg>
      {dot && <span className="absolute bottom-[6px] left-[25px] h-[5px] w-[5px] rounded-full bg-[#9d9d9d]" />}
    </div>
  )
}

function Taskbar() {
  return (
    <div className="relative flex h-[61px] shrink-0 items-center border-t border-black bg-[#1c1c1c] text-white">
      <div className="relative w-[491.5px] shrink-0">
        <svg viewBox="0 0 34 24" className="absolute left-[24px] top-[11px] h-[24px] w-[34px]">
          <path d="M7 18a6 6 0 0 1 1-12 9 9 0 0 1 17 1 6 6 0 0 1 1 11z" fill="#cfe4fb" />
          <path d="M21 14v6a2 2 0 0 1-4 0v-6z" fill="#1a7fe0" />
        </svg>
        <span className="absolute left-[39px] top-[0px] flex h-[19px] w-[19px] items-center justify-center rounded-full bg-[#ff9aa2] text-[13px] text-[#222]">
          1
        </span>
        <div className="ml-[64px] text-[13.5px] leading-[21px]">
          <div>29°C</div>
          <div className="text-[#dcdcdc]">Light rain</div>
        </div>
      </div>
      <Tb>
        <path d="M2 2h13.5v13.5H2zM16.5 2H30v13.5H16.5zM2 16.5h13.5V30H2zM16.5 16.5H30V30H16.5z" fill="#3fc4f2" />
      </Tb>
      <Tb>
        <circle cx="16" cy="16" r="15" fill="#0f6fc0" />
        <path d="M2 12C5 2 25-2 31 14c0 5-5 7-9 5 1-6-8-9-13-5-3 2-3 6 0 11C4 23 1 18 2 12z" fill="#3bc0a0" />
        <path d="M10 18c0-6 12-7 13 0-4 2-5 5-1 8-6 4-12-2-12-8z" fill="#0a3f82" />
      </Tb>
      <Tb>
        <path d="M9 1h14l6 7-3 14-10 9-10-9L3 8z" fill="#f4501e" />
        <path d="M10 9h12l1 5-4 5 1 3-4 3-4-3 1-3-4-5z" fill="#fff" />
      </Tb>
      <Tb>
        <path d="M16 0c1 9 6 15 15 16-9 1-14 7-15 16-1-9-6-15-15-16 9-1 14-7 15-16z" fill="#6f7fd8" />
        <path d="M16 8c1 4 4 7 8 8-4 1-7 4-8 8z" fill="#3d8fe0" />
      </Tb>
      <Tb>
        <rect width="30" height="30" x="1" y="1" rx="4" fill="#fff" />
        <g fill="none" stroke="#222" strokeWidth="1.5">
          <ellipse cx="16" cy="16" rx="10" ry="5" />
          <ellipse cx="16" cy="16" rx="10" ry="5" transform="rotate(60 16 16)" />
          <ellipse cx="16" cy="16" rx="10" ry="5" transform="rotate(120 16 16)" />
        </g>
      </Tb>
      <Tb>
        <path d="M8 4c3-4 10-4 11 1L13 28c-4 3-10 1-10-4z" fill="#2c9de8" />
        <path d="M19 4c2-3 8-2 9 2l1 16c0 5-7 7-10 3L15 13z" fill="#d94ccf" />
        <path d="M9 17h9l-4 11c-5 2-9-1-8-6z" fill="#f5b23a" />
      </Tb>
      <Tb>
        <path d="M3 3l27 3-10 25h-6z" fill="#a79af0" />
        <path d="M8 9l17 3-8 17z" fill="#26c6b8" />
      </Tb>
      <Tb dot>
        <path d="M2 3h12l3 4h13v23H2z" fill="#d89a1d" />
        <path d="M2 9h28v21H2z" fill="#fbd35c" />
        <rect x="11" y="20" width="17" height="8" fill="#1478c8" />
      </Tb>
      <Tb dot>
        <rect x="10" y="6" width="20" height="24" fill="#d9dde3" />
        <rect x="2" y="2" width="19" height="24" rx="2" fill="#4285f4" />
        <text x="11" y="20" fontSize="15" fill="#fff" textAnchor="middle" fontWeight="700">
          G
        </text>
        <text x="25" y="26" fontSize="10" fill="#4285f4" textAnchor="middle">
          文
        </text>
      </Tb>
      <Tb>
        <rect x="2" y="1" width="28" height="30" rx="2" fill="#fff" />
        <path d="M2 1h28v6H2z" fill="#1a73e8" />
        <path d="M2 26h28v5H2z" fill="#34a853" />
        <path d="M26 7h4v19h-4z" fill="#fbbc04" />
        <text x="14" y="23" fontSize="17" fill="#1a73e8" textAnchor="middle" fontWeight="700">
          31
        </text>
      </Tb>
      <Tb>
        <path d="M13 1h13l3 5v20H13z" fill="#0c8ed9" />
        <rect x="1" y="8" width="18" height="18" rx="2" fill="#0f6fc0" />
        <text x="10" y="22" fontSize="14" fill="#fff" textAnchor="middle" fontWeight="700">
          O
        </text>
        <rect x="12" y="22" width="19" height="10" rx="1" fill="#3fe0e8" />
        <text x="21.5" y="30" fontSize="8" fill="#063" textAnchor="middle" fontWeight="700">
          NEW
        </text>
      </Tb>
      <Tb dot>
        <path
          d="M16 2a14 14 0 0 0-12 21L2 31l8-2A14 14 0 1 0 16 2z"
          fill="none"
          stroke="#2ad366"
          strokeWidth="3"
        />
        <path d="M11 9c-3 3-1 7 2 10s7 5 10 2l-3-4-2 1c-2-1-3-3-4-4l1-2z" fill="#2ad366" />
      </Tb>
      <Tb>
        <path d="M9 2h21v28H9z" fill="#c25ee0" />
        <path d="M21 11h9v8h-9z" fill="#9b3bc4" />
        <rect x="1" y="7" width="16" height="18" fill="#6d1fa0" />
        <text x="9" y="21" fontSize="13" fill="#fff" textAnchor="middle" fontWeight="700">
          N
        </text>
      </Tb>
      <Tb>
        <path d="M1 17l6-5 7 8-4 6z" fill="#1b60c4" />
        <path d="M10 26L26 4l5 6-18 20z" fill="#4aa3ee" />
      </Tb>
      <Tb dot>
        <rect x="1" y="4" width="30" height="24" rx="6" fill="#f80000" />
        <path d="M13 11l8 5-8 5z" fill="#fff" />
      </Tb>
      <Tb>
        <circle cx="16" cy="16" r="15" fill="#1ed760" />
        <path d="M8 12c6-2 12-1 17 1M9 17c5-2 10-1 14 1M10 21.5c4-1 8-1 11 1" fill="none" stroke="#111" strokeWidth="2.2" strokeLinecap="round" />
      </Tb>
      <Tb dot>
        <rect x="3" y="18" width="8" height="13" fill="#f9e27a" />
        <rect x="11" y="10" width="8" height="21" fill="#f2c811" />
        <rect x="19" y="1" width="9" height="30" fill="#c8960c" />
      </Tb>
      <div className="ml-auto flex items-center">
        <svg viewBox="0 0 14 8" className="h-[8px] w-[14px]" fill="none" stroke="#fff" strokeWidth="1.8">
          <path d="M1 7l6-5 6 5" />
        </svg>
        <svg viewBox="0 0 18 24" className="ml-[23px] h-[24px] w-[18px]">
          <path d="M9 0l9 3v10c0 5-4 9-9 11-5-2-9-6-9-11V3z" fill="#5aa02c" />
          <path d="M7 6h4v4h4v4h-4v4H7v-4H3v-4h4z" fill="#fff" />
        </svg>
        <svg viewBox="0 0 22 20" className="ml-[19px] h-[20px] w-[22px]" fill="none" stroke="#fff" strokeWidth="1.5">
          <path d="M1 7a14 14 0 0 1 20 0M4 11a10 10 0 0 1 14 0M7 15a5 5 0 0 1 8 0" />
          <circle cx="11" cy="18" r="1" fill="#fff" />
        </svg>
        <svg viewBox="0 0 22 22" className="ml-[9px] h-[22px] w-[22px]" fill="none" stroke="#fff" strokeWidth="1.4">
          <path d="M2 8h4l5-5v16l-5-5H2zM14 8a4 4 0 0 1 0 6M16.5 5a9 9 0 0 1 0 12" />
        </svg>
        <svg viewBox="0 0 22 22" className="ml-[8px] h-[22px] w-[22px]" fill="none" stroke="#fff" strokeWidth="1.4">
          <rect x="2" y="7" width="17" height="11" rx="2" fill="#eee" fillOpacity="0.35" />
          <path d="M19 10h2v5h-2M9 1L6 7h5l-2 5" />
        </svg>
        <div className="ml-[5px] w-[85px] text-right text-[13.5px] leading-[21px]">
          <div>1:51 PM</div>
          <div>7/13/2024</div>
        </div>
        <svg viewBox="0 0 18 20" className="ml-[9px] h-[20px] w-[18px]" fill="#e9b8dd">
          <path d="M9 0c4 0 5 4 5 8v4l3 4H1l3-4V8c0-4 1-8 5-8zM7 17h4v3H7z" />
        </svg>
        <svg viewBox="0 0 30 32" className="ml-[19px] mr-[27px] h-[32px] w-[30px]">
          <path d="M7 4c3-4 10-4 11 1L13 24c-4 3-10 1-10-4z" fill="#2c9de8" />
          <path d="M18 4c2-3 8-2 9 2l1 14c0 5-7 7-10 3L14 12z" fill="#d94ccf" />
          <rect x="7" y="19" width="21" height="12" rx="1" fill="#ffc400" />
          <text x="17.5" y="28.5" fontSize="9" fill="#222" textAnchor="middle" fontWeight="700">
            PRE
          </text>
        </svg>
      </div>
    </div>
  )
}

export default function App() {
  return (
    <div className="flex h-[1080px] w-[1920px] flex-col overflow-hidden bg-[#f3f2f1] font-['Open_Sans','Noto_Sans',sans-serif]">
      <TitleBar />
      <Ribbon />
      <div className="flex h-[746px] shrink-0">
        <LeftRail />
        <div className="flex-1 bg-white">
          <ReportPage />
        </div>
        <SidePanes />
      </div>
      <PageTabs />
      <StatusBar />
      <Taskbar />
    </div>
  )
}
